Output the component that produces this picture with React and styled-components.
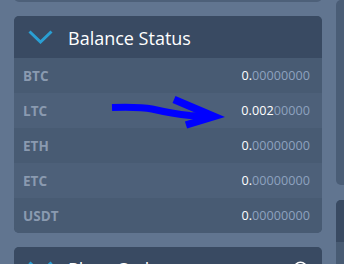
import React from 'react';
import styled, { createGlobalStyle } from 'styled-components';

const GlobalStyle = createGlobalStyle`
  html, body {
    margin: 0;
    padding: 0;
    width: 344px;
    height: 264px;
    overflow: hidden;
    background: #617590;
    font-family: "Open Sans", "Noto Sans", sans-serif;
  }
`;

const Page = styled.div`
  display: flex;
  gap: 14px;
  padding-left: 14px;
  height: 264px;
  overflow: hidden;
  position: relative;
`;

const Column = styled.div`
  display: flex;
  flex-direction: column;
  gap: ${props => props.gap || 14}px;
  width: ${props => props.width}px;
  flex-shrink: 0;
  margin-top: ${props => props.offset || 0}px;
`;

const Panel = styled.section`
  border-radius: 5px;
  overflow: hidden;
  background: #485b73;
  flex-shrink: 0;
`;

const Header = styled.div`
  display: flex;
  align-items: center;
  height: 42px;
  padding: 0 14px;
  background: #394a62;
  color: #ffffff;
  font-size: 18px;
  gap: 15px;
`;

const Title = styled.span`
  flex: 1;
  line-height: 1;
  padding-top: 1px;
`;

const Row = styled.div`
  display: flex;
  align-items: center;
  justify-content: space-between;
  height: 35px;
  padding: 0 12px 0 9px;
  background: ${props => (props.alt ? '#4d6079' : '#485b73')};
`;

const Coin = styled.span`
  font-size: 13.5px;
  font-weight: 700;
  color: #8a9ab0;
`;

const Amount = styled.span`
  font-size: 12.6px;
  color: #8ea2bf;
  letter-spacing: 0.05px;
`;

const Lit = styled.span`
  color: #ffffff;
`;

const Filler = styled.div`
  height: ${props => props.h}px;
  background: ${props => props.bg || '#4a5d76'};
`;

const Scribble = styled.svg`
  position: absolute;
  left: 0;
  top: 0;
  pointer-events: none;
`;

const Chevron = () => (
  <svg width="25" height="14" viewBox="0 0 25 14" style={{ flexShrink: 0 }}>
    <path d="M1.5 1.5 L12.5 12 L23.5 1.5" fill="none" stroke="#2a9fd3" strokeWidth="3" />
  </svg>
);

const HelpIcon = () => (
  <svg width="15" height="15" viewBox="0 0 15 15" style={{ flexShrink: 0 }}>
    <circle cx="7.5" cy="7.5" r="6.2" fill="none" stroke="#ffffff" strokeWidth="1.6" />
    <path d="M5.4 5.8 a2.1 2.1 0 1 1 2.8 2 c-0.6 0.3 -0.7 0.6 -0.7 1.3" fill="none" stroke="#ffffff" strokeWidth="1.5" />
  </svg>
);

const balances = [
  { coin: 'BTC', lit: '0.', rest: '00000000' },
  { coin: 'LTC', lit: '0.002', rest: '00000' },
  { coin: 'ETH', lit: '0.', rest: '00000000' },
  { coin: 'ETC', lit: '0.', rest: '00000000' },
  { coin: 'USDT', lit: '0.', rest: '00000000' },
];

export default function App() {
  return (
    <>
      <GlobalStyle />
      <Page>
        <Column width={308} offset={-33}>
          <Panel>
            <Row alt>
              <Coin />
            </Row>
          </Panel>
          <Panel>
            <Header>
              <Chevron />
              <Title>Balance Status</Title>
            </Header>
            {balances.map((b, i) => (
              <Row key={b.coin} alt={i % 2 === 1}>
                <Coin>{b.coin}</Coin>
                <Amount>
                  <Lit>{b.lit}</Lit>
                  {b.rest}
                </Amount>
              </Row>
            ))}
          </Panel>
          <Panel>
            <Header>
              <Chevron />
              <Title>Place Order</Title>
              <HelpIcon />
            </Header>
            <Row />
          </Panel>
        </Column>
        <Column width={300} gap={15}>
          <Panel>
            <Filler h={185} />
          </Panel>
          <Panel>
            <Filler h={42} bg="#394a62" />
            <Filler h={40} bg="#485b73" />
          </Panel>
        </Column>
        <Scribble width="344" height="264">
          <path
            d="M112 107.5 C130 107 142 107 152 109 C165 112 175 114 190 115.5 L212 116"
            fill="none"
            stroke="#0000ff"
            strokeWidth="7"
            strokeLinecap="butt"
          />
          <path
            d="M174 99.5 L214 116.5 L186 125"
            fill="none"
            stroke="#0000ff"
            strokeWidth="7.5"
            strokeLinejoin="miter"
          />
        </Scribble>
      </Page>
    </>
  );
}
